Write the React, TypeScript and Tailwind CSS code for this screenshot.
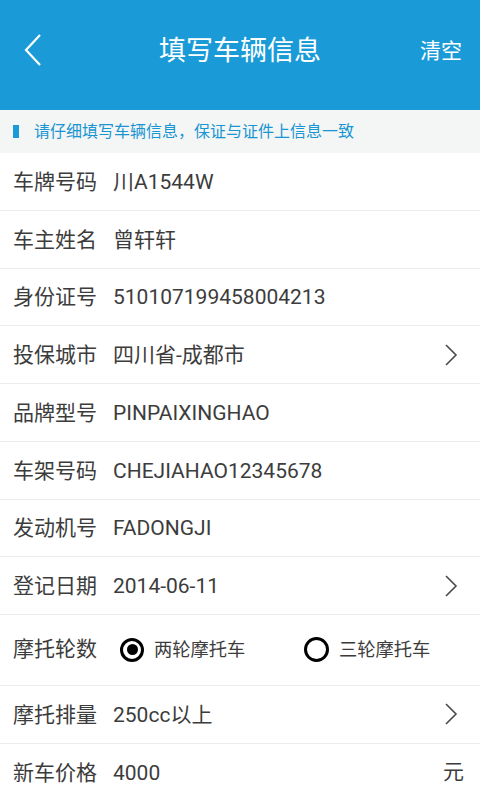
import React from "react";

const font = { fontFamily: 'Roboto, "Noto Sans CJK SC", sans-serif' };

function Chevron() {
  return (
    <svg width="14" height="22" viewBox="0 0 14 22" className="shrink-0">
      <path d="M2 1 L12 11 L2 21" fill="none" stroke="#4a4a4a" strokeWidth="1.6" />
    </svg>
  );
}

function Row({ label, value, right, h = "h-[57.75px]" }: { label: string; value: string; right?: React.ReactNode; h?: string }) {
  return (
    <div className={`flex items-center ${h} border-b border-[#ececec] pl-[13px] pr-[22px]`}>
      <span className="text-[21px] text-[#3c3c3c] w-[100px] shrink-0 leading-none pt-[2px]">{label}</span>
      <span className="flex-1 text-[21px] text-[#3c3c3c] leading-none pt-[2px]">{value}</span>
      {right}
    </div>
  );
}

export default function App() {
  return (
    <div className="w-[480px] h-[800px] overflow-hidden bg-white" style={font}>
      <div className="h-[110px] bg-[#1a9bd8]">
        <div className="relative h-[102px] flex items-center justify-center">
          <svg width="20" height="34" viewBox="0 0 20 34" className="absolute left-[23px] top-[33px]">
            <path d="M17 2 L3 17 L17 32" fill="none" stroke="white" strokeWidth="2.2" />
          </svg>
          <span className="text-white text-[27px] leading-none">填写车辆信息</span>
          <span className="absolute right-[18px] text-white text-[21px] leading-none">清空</span>
        </div>
      </div>
      <div className="h-[43px] bg-[#f4f5f5] flex items-center pl-[13px]">
        <div className="w-[6px] h-[13px] bg-[#1a9bd8] mr-[15px]" />
        <span className="text-[16px] text-[#1a95d3] leading-none">请仔细填写车辆信息，保证与证件上信息一致</span>
      </div>
      <Row label="车牌号码" value="川A1544W" />
      <Row label="车主姓名" value="曾轩轩" />
      <Row label="身份证号" value="510107199458004213" />
      <Row label="投保城市" value="四川省-成都市" right={<Chevron />} />
      <Row label="品牌型号" value="PINPAIXINGHAO" />
      <Row label="车架号码" value="CHEJIAHAO12345678" />
      <Row label="发动机号" value="FADONGJI" />
      <Row label="登记日期" value="2014-06-11" right={<Chevron />} />
      <div className="flex items-center h-[70.5px] border-b border-[#ececec] pl-[13px]">
        <span className="text-[21px] text-[#3c3c3c] w-[107px] shrink-0 leading-none">摩托轮数</span>
        <div className="flex items-center w-[184px]">
          <div className="w-[24px] h-[24px] rounded-full border-[3px] border-black flex items-center justify-center">
            <div className="w-[11px] h-[11px] rounded-full bg-black" />
          </div>
          <span className="ml-[10px] text-[18.3px] text-[#3c3c3c] leading-none">两轮摩托车</span>
        </div>
        <div className="flex items-center">
          <div className="w-[25px] h-[25px] rounded-full border-[3px] border-black" />
          <span className="ml-[10px] text-[18.3px] text-[#3c3c3c] leading-none">三轮摩托车</span>
        </div>
      </div>
      <Row label="摩托排量" value="250cc以上" right={<Chevron />} h="h-[58px]" />
      <Row label="新车价格" value="4000" right={<span className="text-[21px] text-[#3c3c3c] leading-none -mr-[6px]">元</span>} h="h-[58px]" />
    </div>
  );
}
